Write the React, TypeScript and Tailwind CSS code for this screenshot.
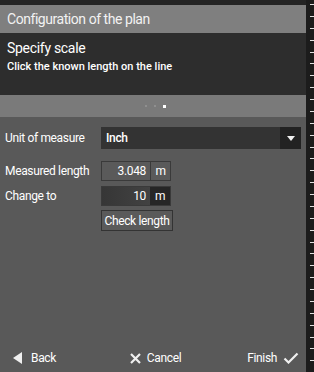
import React from "react";

const font = { fontFamily: 'Roboto, "Open Sans", sans-serif' };

function Ruler() {
  const ticks = Array.from({ length: 31 }, (_, i) => i);
  return (
    <div className="flex w-[8px] flex-col bg-[#1c1c1c] pt-[4px]">
      {ticks.map((i) => (
        <div key={i} className="flex h-[12px] items-start justify-end">
          <div className="h-[1px] w-[4px] bg-[#e0e0e0]" />
        </div>
      ))}
    </div>
  );
}

export default function App() {
  return (
    <div className="flex h-[372px] w-[314px] overflow-hidden bg-[#1c1c1c] text-white" style={font}>
      <div className="flex w-[306px] flex-col">
        <div className="h-[5px] bg-[#242424]" />
        <div className="flex h-[28px] items-center whitespace-nowrap bg-[#7f7f7f] pl-[7px] text-[14px] tracking-[-0.45px] text-[#f2f2f2]">
          Configuration of the plan
        </div>
        <div className="flex h-[62px] flex-col whitespace-nowrap bg-[#2d2d2d] pl-[7px] pt-[6px]">
          <div className="text-[14px] leading-[18px] tracking-[-0.3px]">Specify scale</div>
          <div className="mt-[2px] text-[11px] font-medium leading-[16px]">
            Click the known length on the line
          </div>
        </div>
        <div className="flex h-[22px] items-center justify-center gap-[7px] bg-[#7a7a7a] pl-[4px]">
          <div className="h-[2px] w-[2px] bg-[#8f8f8f]" />
          <div className="h-[2px] w-[2px] bg-[#8f8f8f]" />
          <div className="h-[3px] w-[3px] bg-white" />
        </div>
        <div className="flex flex-1 flex-col whitespace-nowrap bg-[#595959] px-[5px] pt-[10px] text-[12px] tracking-[-0.35px]">
          <div className="flex h-[22px] items-center">
            <div className="w-[96px]">Unit of measure</div>
            <div className="flex h-[22px] flex-1 items-stretch bg-[#333333]">
              <div className="flex flex-1 items-center pl-[5px] font-medium">Inch</div>
              <div className="flex w-[21px] items-center justify-center bg-[#222222]">
                <svg width="8" height="5" viewBox="0 0 8 5">
                  <path d="M0 0 H8 L4 5 Z" fill="#f0f0f0" />
                </svg>
              </div>
            </div>
          </div>
          <div className="mt-[12px] flex h-[20px] items-center">
            <div className="w-[96px]">Measured length</div>
            <div className="flex h-[20px] border border-[#3a3a3a]">
              <div className="flex w-[48px] items-center justify-end bg-[#5a5a5a] pr-[4px]">3.048</div>
              <div className="flex w-[20px] items-center justify-center border-l border-[#3a3a3a] bg-[#5a5a5a]">m</div>
            </div>
          </div>
          <div className="mt-[5px] flex h-[20px] items-center">
            <div className="w-[96px]">Change to</div>
            <div className="flex h-[20px] border border-[#3a3a3a]">
              <div className="flex w-[48px] items-center justify-end bg-gradient-to-r from-[#363636] to-[#424242] pr-[4px]">10</div>
              <div className="flex w-[20px] items-center justify-center bg-[#262626]">m</div>
            </div>
          </div>
          <div className="mt-[4px] flex">
            <div className="w-[96px]" />
            <div className="flex h-[21px] w-[72px] items-center justify-center border border-[#333333] bg-[#5a5a5a]">
              Check length
            </div>
          </div>
          <div className="flex-1" />
          <div className="flex h-[30px] items-center justify-between pl-[8px] pr-[2px] pt-[2px] text-[12px]">
            <div className="flex items-center gap-[9px]">
              <svg width="9" height="12" viewBox="0 0 9 12">
                <path d="M9 0 V12 L0 6 Z" fill="#f0f0f0" />
              </svg>
              <span>Back</span>
            </div>
            <div className="flex items-center gap-[6px] pl-[8px]">
              <svg width="11" height="11" viewBox="0 0 11 11">
                <path d="M1 1 L10 10 M10 1 L1 10" stroke="#f0f0f0" strokeWidth="2.2" />
              </svg>
              <span>Cancel</span>
            </div>
            <div className="flex items-center gap-[6px]">
              <span>Finish</span>
              <svg width="16" height="12" viewBox="0 0 16 12">
                <path d="M1.5 6.5 L5.5 10.5 L14.5 1.5" stroke="#f0f0f0" strokeWidth="2.2" fill="none" />
              </svg>
            </div>
          </div>
        </div>
      </div>
      <Ruler />
    </div>
  );
}
